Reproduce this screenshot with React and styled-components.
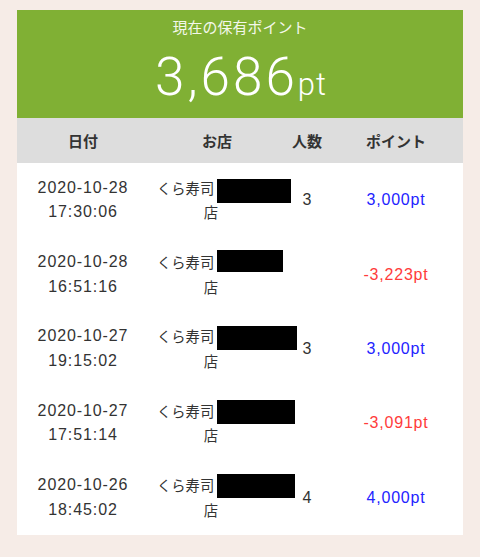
import React from 'react';
import styled, { createGlobalStyle } from 'styled-components';

// 履歴データ（店舗名は黒塗り）
const historyRows = [
  { date: '2020-10-28', time: '17:30:06', people: '3', point: '3,000pt', plus: true, mask: 74, dy: 3 },
  { date: '2020-10-28', time: '16:51:16', people: '', point: '-3,223pt', plus: false, mask: 66, dy: 0, mh: 22 },
  { date: '2020-10-27', time: '19:15:02', people: '3', point: '3,000pt', plus: true, mask: 80, dy: 1.5 },
  { date: '2020-10-27', time: '17:51:14', people: '', point: '-3,091pt', plus: false, mask: 78, dy: 1.5 },
  { date: '2020-10-26', time: '18:45:02', people: '4', point: '4,000pt', plus: true, mask: 78, dy: 1 },
];

const GlobalStyle = createGlobalStyle`
  html, body {
    margin: 0;
    padding: 0;
    background: #f6ece7;
  }
  body {
    font-family: 'Liberation Sans', 'Noto Sans CJK JP', sans-serif;
    color: #333;
  }
`;

const App = () => (
  <Page>
    <GlobalStyle />
    <Card>
      <PointHeader>
        <PointTitle>現在の保有ポイント</PointTitle>
        <PointTotal>
          3,686<PointUnit>pt</PointUnit>
        </PointTotal>
      </PointHeader>
      <HistoryTable>
        <HeadRow>
          <HeadCell>日付</HeadCell>
          <HeadCell>お店</HeadCell>
          <HeadCell>人数</HeadCell>
          <HeadCell>ポイント</HeadCell>
        </HeadRow>
        {historyRows.map((row, i) => (
          <BodyRow key={i}>
            <DateCell>
              <div>{row.date}</div>
              <div>{row.time}</div>
            </DateCell>
            <ShopCell>
              <ShopLine>
                くら寿司
                <Mask style={{ width: row.mask, top: row.dy, height: row.mh || 24 }} />
              </ShopLine>
              <ShopLine>店</ShopLine>
            </ShopCell>
            <PeopleCell>{row.people}</PeopleCell>
            <PointCell $plus={row.plus}>{row.point}</PointCell>
          </BodyRow>
        ))}
      </HistoryTable>
    </Card>
  </Page>
);

export default App;

const Page = styled.div`
  min-height: 557px;
  padding: 10px 17px 22px;
  box-sizing: border-box;
`;

const Card = styled.div`
  width: 446px;
  background: #fff;
`;

const PointHeader = styled.div`
  height: 108px;
  box-sizing: border-box;
  padding-top: 7px;
  background: #80b034;
  color: #fff;
  text-align: center;
`;

const PointTitle = styled.div`
  font-family: 'Noto Sans CJK JP', sans-serif;
  font-size: 15px;
  line-height: 20px;
  color: #f3f7ea;
`;

const PointTotal = styled.div`
  margin-top: 10px;
  padding-left: 2px;
  font-family: 'Roboto', 'Liberation Sans', sans-serif;
  font-weight: 300;
  font-size: 53px;
  line-height: 60px;
  letter-spacing: 3px;
`;

const PointUnit = styled.span`
  font-size: 31px;
  line-height: 1;
  letter-spacing: 1px;
`;

const HistoryTable = styled.div`
  display: flex;
  flex-direction: column;
`;

const columns = '132px 136px 44px 134px';

const HeadRow = styled.div`
  display: grid;
  grid-template-columns: ${columns};
  height: 45px;
  align-items: center;
  background: #dddddd;
`;

const HeadCell = styled.div`
  font-family: 'Noto Sans CJK JP', sans-serif;
  font-weight: 700;
  font-size: 15px;
  text-align: center;
  color: #333;
`;

const BodyRow = styled.div`
  display: grid;
  grid-template-columns: ${columns};
  height: 74.4px;
  align-items: center;
`;

const DateCell = styled.div`
  font-size: 16px;
  line-height: 24.5px;
  letter-spacing: 0.9px;
  text-align: center;
  color: #333;
`;

const ShopCell = styled.div`
  padding: 0 20px 0 8px;
  font-family: 'Noto Sans CJK JP', sans-serif;
  font-size: 14.3px;
  color: #333;
`;

const ShopLine = styled.div`
  height: 24.5px;
  line-height: 24.5px;
  text-align: center;
  white-space: nowrap;
`;

const Mask = styled.span`
  position: relative;
  display: inline-block;
  vertical-align: top;
  margin-left: 3px;
  background: #000;
`;

const PeopleCell = styled.div`
  font-size: 16px;
  text-align: center;
  color: #333;
`;

const PointCell = styled.div`
  font-size: 16px;
  letter-spacing: 0.8px;
  text-align: center;
  color: ${({ $plus }) => ($plus ? '#2323ff' : '#ff3b3b')};
`;
